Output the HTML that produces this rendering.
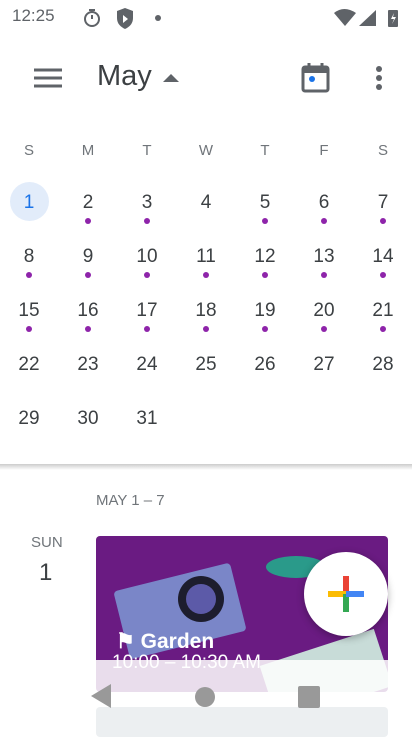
<!DOCTYPE html><html><head><style>
body{margin:0;width:412px;height:732px;overflow:hidden;background:#fff;font-family:"Liberation Sans",sans-serif;position:relative}
.a{position:absolute}
.d{position:absolute;width:40px;margin-left:-20px;text-align:center;font-size:19px;color:#3c4043}
.dot{position:absolute;width:6px;height:6px;border-radius:3px;background:#8e24aa;margin-left:-3px}
.w{position:absolute;width:30px;margin-left:-15px;text-align:center;font-size:15px;color:#70757a}
</style></head><body>
<div class="a" style="left:12px;top:6px;font-size:17px;color:#5f6368">12:25</div>
<svg class="a" style="left:82px;top:8px" width="20" height="20"><circle cx="10" cy="11" r="7" fill="none" stroke="#5f6368" stroke-width="2"/><path d="M7 2h6M10 11V7" stroke="#5f6368" stroke-width="2"/></svg>
<svg class="a" style="left:115px;top:8px" width="20" height="22"><path d="M2 3l8-3 8 3v7c0 6-4 9-8 11-4-2-8-5-8-11z" fill="#5f6368"/><path d="M8 7l5 4-5 4z" fill="#fff"/></svg>
<div class="a" style="left:155px;top:15px;width:6px;height:6px;border-radius:3px;background:#5f6368"></div>
<svg class="a" style="left:332px;top:8px" width="72" height="20"><path d="M2 5q10-8 22 0l-11 13z" fill="#5f6368"/><path d="M27 18L44 2v16z" fill="#5f6368"/><rect x="56" y="2" width="10" height="17" rx="1" fill="#5f6368"/><path d="M62 5l-3 6h3l-2 5 4-7h-3z" fill="#fff"/></svg>
<svg class="a" style="left:33px;top:68px" width="30" height="22"><path d="M1 2h28M1 10h28M1 18h28" stroke="#5f6368" stroke-width="3"/></svg>
<div class="a" style="left:97px;top:60px;font-size:29px;color:#3c4043">May</div>
<svg class="a" style="left:163px;top:73px" width="16" height="10"><path d="M0 9L8 1l8 8z" fill="#5f6368"/></svg>
<svg class="a" style="left:301px;top:62px" width="30" height="32"><rect x="2" y="5" width="25" height="24" rx="2" fill="none" stroke="#5f6368" stroke-width="3"/><rect x="2" y="5" width="25" height="6" fill="#5f6368"/><path d="M8 1v5M21 1v5" stroke="#5f6368" stroke-width="3"/><circle cx="11" cy="17" r="3" fill="#1a73e8"/></svg>
<svg class="a" style="left:372px;top:64px" width="14" height="28"><circle cx="7" cy="5" r="3" fill="#5f6368"/><circle cx="7" cy="14" r="3" fill="#5f6368"/><circle cx="7" cy="23" r="3" fill="#5f6368"/></svg>
<div class="w" style="left:29px;top:142px">S</div><div class="w" style="left:88px;top:142px">M</div><div class="w" style="left:147px;top:142px">T</div><div class="w" style="left:206px;top:142px">W</div><div class="w" style="left:265px;top:142px">T</div><div class="w" style="left:324px;top:142px">F</div><div class="w" style="left:383px;top:142px">S</div>
<div class="a" style="left:10px;top:182px;width:39px;height:39px;border-radius:50%;background:#e2ecfa"></div>
<div id="g"></div>
<div class="a" style="left:0;top:464px;width:412px;height:6px;background:linear-gradient(#ccc,#fff)"></div>
<div class="a" style="left:96px;top:492px;font-size:15px;color:#70757a">MAY 1 – 7</div>
<div class="a" style="left:31px;top:534px;font-size:15px;color:#70757a">SUN</div>
<div class="a" style="left:39px;top:559px;font-size:24px;color:#3c4043">1</div>
<div class="a" style="left:96px;top:536px;width:292px;height:156px;border-radius:4px;background:#6a1b82;overflow:hidden">
<div class="a" style="left:24px;top:40px;width:120px;height:70px;background:#7a86c8;transform:rotate(-14deg);border-radius:4px"></div>
<div class="a" style="left:82px;top:40px;width:46px;height:46px;border-radius:50%;background:#1d1d2e"></div>
<div class="a" style="left:90px;top:48px;width:30px;height:30px;border-radius:50%;background:#5c5aa8"></div>
<div class="a" style="left:170px;top:110px;width:120px;height:60px;background:#c8dcd8;transform:rotate(-18deg)"></div>
<div class="a" style="left:170px;top:20px;width:60px;height:22px;border-radius:50%;background:#2a9a8a"></div>
<div class="a" style="left:20px;top:93px;font-size:21px;font-weight:bold;color:#fff">⚑ Garden</div>
<div class="a" style="left:16px;top:116px;font-size:19px;color:#fff">10:00 – 10:30 AM</div>
</div>
<div class="a" style="left:0;top:660px;width:412px;height:72px;background:rgba(255,255,255,.85)"></div>
<div class="a" style="left:96px;top:707px;width:292px;height:30px;border-radius:4px;background:#eceff1"></div>
<svg class="a" style="left:90px;top:682px" width="240" height="32"><path d="M1 14L21 2v24z" fill="#999"/><circle cx="115" cy="15" r="10" fill="#999"/><rect x="208" y="4" width="22" height="22" rx="2" fill="#999"/></svg>
<div class="a" style="left:304px;top:552px;width:84px;height:84px;border-radius:50%;background:#fff;box-shadow:0 2px 8px rgba(0,0,0,.3)"></div>
<svg class="a" style="left:328px;top:576px" width="36" height="36"><rect x="15" y="0" width="6" height="18" fill="#ea4335"/><rect x="0" y="15" width="18" height="6" fill="#fbbc04"/><rect x="15" y="18" width="6" height="18" fill="#34a853"/><rect x="18" y="15" width="18" height="6" fill="#4285f4"/></svg>
<script>
var g='',xs=[29,88,147,206,265,324,383],ys=[202,256,310,364,418];
var dots={2:1,3:1,5:1,6:1,7:1};for(var i=8;i<=21;i++)dots[i]=1;
for(var n=1;n<=31;n++){var c=(n-1)%7,r=Math.floor((n-1)/7);
g+='<div class="d" style="left:'+xs[c]+'px;top:'+(ys[r]-10)+'px;'+(n==1?'color:#1a73e8':'')+'">'+n+'</div>';
if(dots[n])g+='<div class="dot" style="left:'+xs[c]+'px;top:'+(ys[r]+16)+'px"></div>';}
document.getElementById('g').innerHTML=g;
</script>
</body></html>
